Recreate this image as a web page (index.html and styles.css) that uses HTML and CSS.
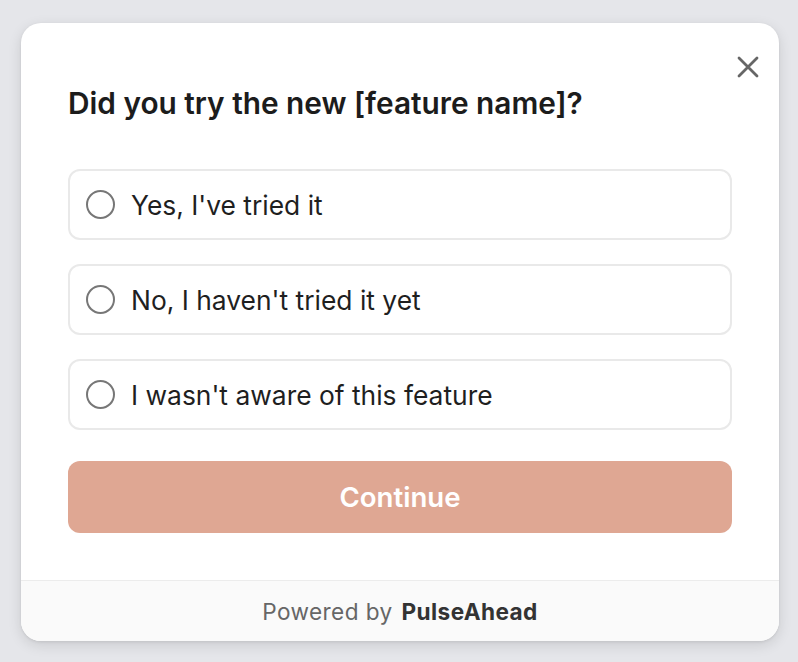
FILE: index.html
```html
<!DOCTYPE html>
<html>
<head>
<meta charset="utf-8">
<link rel="stylesheet" href="styles.css">
</head>
<body>
<div class="card">
  <button class="close" aria-label="Close">
    <svg width="22" height="22" viewBox="0 0 22 22"><path d="M2 2 L20 20 M20 2 L2 20" stroke="#666" stroke-width="2.8" stroke-linecap="round" fill="none"/></svg>
  </button>
  <div class="content">
    <h1 class="title">Did you try the new [feature name]?</h1>
    <div class="options">
      <label class="option"><span class="radio"></span><span class="label">Yes, I've tried it</span></label>
      <label class="option"><span class="radio"></span><span class="label">No, I haven't tried it yet</span></label>
      <label class="option"><span class="radio"></span><span class="label">I wasn't aware of this feature</span></label>
    </div>
    <button class="continue">Continue</button>
  </div>
  <div class="footer">Powered by <strong>PulseAhead</strong></div>
</div>
</body>
</html>
```
FILE: styles.css
```css
html, body {
  margin: 0;
  padding: 0;
}
body {
  background: #e5e6ea;
  font-family: Inter, "Noto Sans", sans-serif;
  width: 798px;
  height: 662px;
  overflow: hidden;
}
.card {
  position: relative;
  margin: 23px 0 0 21px;
  width: 758px;
  height: 618px;
  background: #fff;
  border-radius: 20px;
  box-shadow: 0 4px 14px rgba(0,0,0,0.12), 0 1px 3px rgba(0,0,0,0.08);
  overflow: hidden;
  display: flex;
  flex-direction: column;
}
.close {
  position: absolute;
  top: 33px;
  right: 20px;
  width: 22px;
  height: 22px;
  padding: 0;
  border: none;
  background: none;
  display: flex;
}
.content {
  padding: 64px 47px 0 47px;
  flex: 1;
  display: flex;
  flex-direction: column;
}
.title {
  margin: 0;
  font-size: 29.8px;
  line-height: 32px;
  font-weight: 600;
  color: #1c1c1c;
  letter-spacing: 0;
}
.options {
  margin-top: 50px;
  display: flex;
  flex-direction: column;
  gap: 24px;
}
.option {
  height: 71px;
  box-sizing: border-box;
  border: 2px solid #e9e9e9;
  border-radius: 12px;
  display: flex;
  align-items: center;
  padding-left: 16px;
}
.radio {
  width: 29px;
  height: 29px;
  box-sizing: border-box;
  border: 2px solid #777;
  border-radius: 50%;
  flex: none;
}
.label {
  margin-left: 16px;
  font-size: 26.4px;
  color: #1f1f1f;
}
.continue {
  margin-top: 31px;
  height: 72px;
  border: none;
  border-radius: 12px;
  background: #dfa793;
  color: #fff;
  font-family: inherit;
  font-size: 27.6px;
  font-weight: 600;
}
.footer {
  height: 61px;
  box-sizing: border-box;
  border-top: 1.5px solid #ececec;
  background: #fafafa;
  display: flex;
  align-items: center;
  justify-content: center;
  font-size: 22.6px;
  color: #666;
  letter-spacing: 0.4px;
}
.footer strong {
  margin-left: 9px;
  color: #333;
  font-weight: 700;
}
```
